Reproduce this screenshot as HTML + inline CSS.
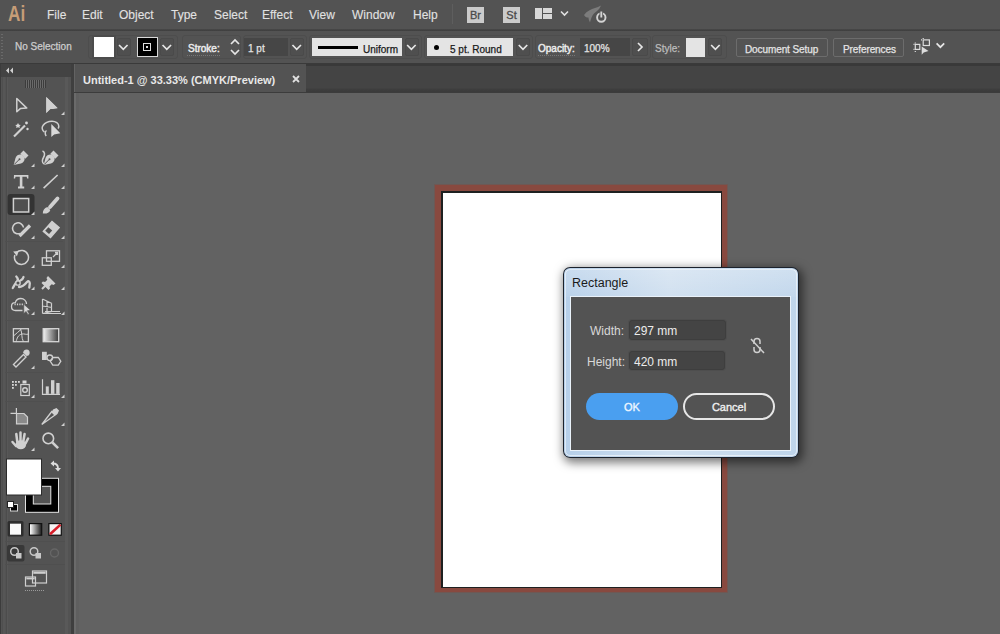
<!DOCTYPE html>
<html><head><meta charset="utf-8">
<style>
*{margin:0;padding:0;box-sizing:border-box}
html,body{width:1000px;height:634px;overflow:hidden;background:#626262;font-family:"Liberation Sans",sans-serif}
.a{position:absolute;white-space:nowrap}
.menu{color:#e2e2e2;font-size:12px;line-height:14px;top:8px;-webkit-text-stroke:0.1px currentColor}
.cb{color:#e4e4e4;font-size:10px;line-height:12px;-webkit-text-stroke:0.25px currentColor}
.dk{color:#1a1a1a;font-size:10px;line-height:12px;-webkit-text-stroke:0.25px currentColor}
.dlg{color:#d8d8d8;font-size:12px;line-height:14px}
</style></head><body>
<!-- bars -->
<div class="a" style="left:0;top:0;width:1000px;height:30px;background:#535353"></div>
<div class="a" style="left:0;top:29px;width:1000px;height:2px;background:linear-gradient(#484848,#3e3e3e)"></div>
<div class="a" style="left:0;top:31px;width:1000px;height:32px;background:#535353"></div>
<div class="a" style="left:0;top:63px;width:1000px;height:1px;background:#3a3a3a"></div>
<!-- tab row -->
<div class="a" style="left:74px;top:64px;width:926px;height:29px;background:linear-gradient(#393939 0 2px,#444444 2px 24px,#3e3e3e 25px,#393939)"></div>
<div class="a" style="left:74px;top:64px;width:232px;height:28px;background:#535353;border-left:1px solid #636363"></div>
<div class="a" style="left:74px;top:92px;width:926px;height:1px;background:#3c3c3c"></div>
<!-- toolbar panel -->
<div class="a" style="left:0;top:64px;width:71px;height:570px;background:#535353"></div>
<div class="a" style="left:0;top:64px;width:71px;height:13px;background:#434343"></div>
<div class="a" style="left:65px;top:77px;width:3px;height:557px;background:#595959"></div>
<div class="a" style="left:71px;top:64px;width:3px;height:570px;background:#3f3f3f"></div>
<div class="a" style="left:74px;top:93px;width:2px;height:541px;background:#6a6a6a"></div>
<div class="a" style="left:76px;top:93px;width:3px;height:541px;background:#5f5f5f"></div>

<!-- menu -->
<div class="a" style="left:8px;top:1px;font-size:22px;line-height:25px;font-weight:bold;color:#c69d77;transform:scaleX(0.78);transform-origin:0 0">Ai</div>
<div class="a menu" style="left:47px">File</div>
<div class="a menu" style="left:82px">Edit</div>
<div class="a menu" style="left:119px">Object</div>
<div class="a menu" style="left:171px">Type</div>
<div class="a menu" style="left:214px">Select</div>
<div class="a menu" style="left:262px">Effect</div>
<div class="a menu" style="left:309px">View</div>
<div class="a menu" style="left:352px">Window</div>
<div class="a menu" style="left:413px">Help</div>
<div class="a" style="left:452px;top:4px;width:1px;height:20px;background:#5e5e5e"></div>
<div class="a" style="left:467px;top:7px;width:17px;height:16px;background:#cbcbcb;color:#4a4a4a;font-size:11px;line-height:17px;text-align:center;-webkit-text-stroke:0.3px currentColor">Br</div>
<div class="a" style="left:503px;top:7px;width:17px;height:16px;background:#cbcbcb;color:#4a4a4a;font-size:11px;line-height:17px;text-align:center;-webkit-text-stroke:0.3px currentColor">St</div>
<svg class="a" style="left:530px;top:0" width="90" height="30">
 <rect x="5" y="8" width="7" height="11" fill="#d8d8d8"/>
 <rect x="13" y="8" width="9" height="5" fill="#d8d8d8"/>
 <rect x="13" y="14" width="9" height="5" fill="#d8d8d8"/>
 <path d="M31 11.5l3.5 3.5 3.5-3.5" stroke="#e0e0e0" stroke-width="1.6" fill="none"/>
 <path d="M54 15c3-4 7-6 11-7 2-.5 4-1.5 6-2.5-1 2-2 4-4 5.5l-3 2.5c-2 2-3 5-4 9-1-2-1.5-3.5-1.5-5-1.5 0-3 0-4.5-2.5z" fill="#7c7c7c"/>
 <circle cx="71.3" cy="17.5" r="4.2" stroke="#d4d4d4" stroke-width="1.9" fill="none"/>
 <path d="M71.3 11.5v6" stroke="#535353" stroke-width="3.5"/>
 <path d="M71.3 11.5v6" stroke="#d4d4d4" stroke-width="1.9"/>
</svg>

<!-- control bar -->

<div class="a" style="left:88px;top:35px;width:90px;height:24px;border:1px solid #4d4d4d;border-radius:3px"></div>
<div class="a" style="left:182px;top:35px;width:59px;height:24px;border:1px solid #4d4d4d;border-radius:3px"></div>
<div class="a" style="left:243px;top:35px;width:64px;height:24px;border:1px solid #4d4d4d;border-radius:3px"></div>
<div class="a" style="left:309px;top:35px;width:113px;height:24px;border:1px solid #4d4d4d;border-radius:3px"></div>
<div class="a" style="left:424px;top:35px;width:109px;height:24px;border:1px solid #4d4d4d;border-radius:3px"></div>
<div class="a" style="left:535px;top:35px;width:116px;height:24px;border:1px solid #4d4d4d;border-radius:3px"></div>
<div class="a" style="left:652px;top:35px;width:75px;height:24px;border:1px solid #4d4d4d;border-radius:3px"></div>

<div class="a" style="left:1px;top:34px;width:2px;height:27px;background:repeating-linear-gradient(#6a6a6a 0 1px,transparent 1px 3px)"></div>
<div class="a cb" style="left:15px;top:41px;color:#cdcdcd">No Selection</div>
<div class="a" style="left:92px;top:35px;width:24px;height:24px;background:#4c4c4c;border-radius:2px"></div>
<div class="a" style="left:94px;top:37px;width:20px;height:20px;background:#ffffff"></div>
<div class="a" style="left:117px;top:38px;width:14px;height:18px;background:#4f4f4f;border:1px solid #4a4a4a;border-radius:2px"></div>
<div class="a" style="left:137px;top:37px;width:21px;height:20px;background:#000;border:1px solid #d8d8d8"></div>
<div class="a" style="left:143px;top:43px;width:8px;height:8px;border:1.5px solid #e0e0e0"></div>
<div class="a" style="left:146px;top:46px;width:2px;height:2px;background:#e0e0e0"></div>
<div class="a" style="left:160px;top:38px;width:14px;height:18px;background:#4f4f4f;border:1px solid #4a4a4a;border-radius:2px"></div>
<div class="a cb" style="left:188px;top:43px;color:#ececec;-webkit-text-stroke:0.45px #ececec">Stroke:</div>
<div class="a" style="left:187px;top:55px;width:33px;height:1px;background:repeating-linear-gradient(90deg,#777 0 1px,transparent 1px 2px)"></div>
<div class="a" style="left:244px;top:38px;width:44px;height:18px;background:#464646"></div>
<div class="a cb" style="left:248px;top:43px">1 pt</div>
<div class="a" style="left:290px;top:38px;width:14px;height:18px;background:#4f4f4f;border:1px solid #4a4a4a;border-radius:2px"></div>
<div class="a" style="left:312px;top:38px;width:90px;height:18px;background:#e4e4e4"></div>
<div class="a" style="left:318px;top:46px;width:40px;height:3px;background:#000"></div>
<div class="a dk" style="left:363px;top:44px">Uniform</div>
<div class="a" style="left:405px;top:38px;width:14px;height:18px;background:#4f4f4f;border:1px solid #4a4a4a;border-radius:2px"></div>
<div class="a" style="left:427px;top:38px;width:86px;height:18px;background:#e4e4e4"></div>
<div class="a" style="left:434px;top:45px;width:5px;height:5px;border-radius:50%;background:#000"></div>
<div class="a dk" style="left:450px;top:44px">5 pt. Round</div>
<div class="a" style="left:516px;top:38px;width:14px;height:18px;background:#4f4f4f;border:1px solid #4a4a4a;border-radius:2px"></div>
<div class="a cb" style="left:538px;top:43px;color:#ececec;-webkit-text-stroke:0.45px #ececec">Opacity:</div>
<div class="a" style="left:538px;top:55px;width:37px;height:1px;background:repeating-linear-gradient(90deg,#777 0 1px,transparent 1px 2px)"></div>
<div class="a" style="left:580px;top:38px;width:50px;height:18px;background:#464646"></div>
<div class="a cb" style="left:584px;top:43px">100%</div>
<div class="a" style="left:632px;top:38px;width:16px;height:18px;background:#4f4f4f;border:1px solid #4a4a4a;border-radius:2px"></div>
<div class="a cb" style="left:655px;top:43px;color:#bcbcbc">Style:</div>
<div class="a" style="left:686px;top:38px;width:19px;height:19px;background:#e4e4e4"></div>
<div class="a" style="left:708px;top:38px;width:14px;height:18px;background:#4f4f4f;border:1px solid #4a4a4a;border-radius:2px"></div>
<div class="a" style="left:736px;top:38px;width:92px;height:19px;border:1px solid #6c6c6c;border-radius:2px;background:#535353"></div>
<div class="a cb" style="left:745px;top:44px;letter-spacing:-0.1px">Document Setup</div>
<div class="a" style="left:833px;top:38px;width:71px;height:19px;border:1px solid #6c6c6c;border-radius:2px;background:#535353"></div>
<div class="a cb" style="left:843px;top:44px;letter-spacing:-0.1px">Preferences</div>
<svg class="a" style="left:0;top:0;overflow:visible" width="1000" height="64">
 <g stroke="#e6e6e6" stroke-width="1.7" fill="none">
  <path d="M119.05 45l4.25 4.25 4.25-4.25"/>
  <path d="M162.55 45l4.25 4.25 4.25-4.25"/>
  <path d="M292.45 45l4.25 4.25 4.25-4.25"/>
  <path d="M407.15 45l4.25 4.25 4.25-4.25"/>
  <path d="M518.75 45l4.25 4.25 4.25-4.25"/>
  <path d="M711.15 45l4.25 4.25 4.25-4.25"/>
  <path d="M936.6 43.4l3.8 3.8 3.8-3.8"/>
  <path d="M231 44l4-4 4 4"/>
  <path d="M231 50l4 4 4-4"/>
  <path d="M638 43l4 4-4 4"/>
 </g>
 <g stroke="#dcdcdc" stroke-width="1.2" fill="none">
  <rect x="915.3" y="44.4" width="4.5" height="5"/>
  <rect x="923.2" y="39.9" width="6.2" height="5.6"/>
  <path d="M913.5 44.4h1M913.5 49.4h1M915.3 42.5v1M915.3 51v1M921 39.9h1M923.2 38v1"/>
 </g>
 <path d="M921.7 46.5v8.3l2-2.3 4.8-1.5z" fill="#dcdcdc"/>
</svg>

<!-- tab -->
<div class="a" style="left:83px;top:74px;font-size:11px;line-height:13px;font-weight:bold;color:#e8e8e8">Untitled-1 @ 33.33% (CMYK/Preview)</div>
<svg class="a" style="left:290px;top:73px" width="12" height="12"><path d="M3 3l6 6M9 3l-6 6" stroke="#e0e0e0" stroke-width="1.8"/></svg>

<!-- artboard -->
<div class="a" style="left:434px;top:184px;width:294px;height:409px;background:#6e5854"></div><div class="a" style="left:435px;top:185px;width:292px;height:407px;background:#88493f"></div>
<div class="a" style="left:441px;top:191px;width:281px;height:397px;background:#1e2020"></div>
<div class="a" style="left:443px;top:193px;width:278px;height:394px;background:#ffffff"></div>

<!-- TOOLBAR -->
<svg class="a" style="left:0;top:0" width="80" height="634">
<defs>
 <linearGradient id="gr" x1="0" x2="1" y1="0" y2="0"><stop offset="0" stop-color="#f4f4f4"/><stop offset="1" stop-color="#3a3a3a"/></linearGradient>
 <linearGradient id="gr2" x1="0" x2="1" y1="0" y2="0"><stop offset="0" stop-color="#ffffff"/><stop offset="1" stop-color="#222"/></linearGradient>
</defs>
<!-- header -->
<path d="M9 67.5v6l-3-3z M13 67.5v6l-3-3z" fill="#cfcfcf"/>
<g stroke="#3c3c3c" stroke-width="1">
 <path d="M25.5 80v8M27.5 80v8M29.5 80v8M31.5 80v8M33.5 80v8M35.5 80v8M37.5 80v8M39.5 80v8M41.5 80v8M43.5 80v8M45.5 80v8"/>
</g>
<g stroke="#6a6a6a" stroke-width="1">
 <path d="M26.5 80v8M28.5 80v8M30.5 80v8M32.5 80v8M34.5 80v8M36.5 80v8M38.5 80v8M40.5 80v8M42.5 80v8M44.5 80v8"/>
</g>
<!-- separators -->
<rect x="0" y="64" width="1" height="570" fill="#3c3c3c"/>
<rect x="2" y="77" width="1" height="557" fill="#4f4f4f"/><rect x="3" y="77" width="2" height="557" fill="#565656"/><rect x="6" y="77" width="1" height="557" fill="#4c4c4c"/><rect x="7" y="77" width="1" height="557" fill="#585858"/>
<g fill="#4f4f4f">
 <rect x="5" y="241" width="58" height="1"/>
 <rect x="5" y="320" width="58" height="1"/>
 <rect x="5" y="372" width="58" height="1"/>
 <rect x="5" y="401" width="58" height="1"/>
 <rect x="5" y="541" width="60" height="1"/>
 <rect x="5" y="564" width="60" height="1"/>
</g>
<!-- active rect bg -->
<rect x="7.5" y="194" width="27" height="21" rx="3" fill="#333333"/>
<rect x="7" y="545" width="17.5" height="16.5" rx="2" fill="#383838"/>

<g fill="#d0d0d0" stroke="none">
 <!-- corner triangles -->
 <path d="M61 115h3.5v-3.5z M31 167h3.5v-3.5z M61 167h3.5v-3.5z M31 189h3.5v-3.5z M61 189h3.5v-3.5z M31 215h3.5v-3.5z M61 215h3.5v-3.5z M31 239h3.5v-3.5z M61 239h3.5v-3.5z M31 268h3.5v-3.5z M61 268h3.5v-3.5z M31 290h3.5v-3.5z M61 290h3.5v-3.5z M31 315h3.5v-3.5z M61 315h3.5v-3.5z M31 369h3.5v-3.5z M31 398h3.5v-3.5z M61 398h3.5v-3.5z M61 426h3.5v-3.5z M31 451h3.5v-3.5z"/>
 <!-- selection filled arrow -->
 <path d="M46.3 97v16l3.6-4 3.2 0 4.5-1z"/>
 <path d="M46.3 97L57.6 108.3 51 108.5 46.3 113z"/>
 <!-- pen -->
 <path d="M13.7 165 L15.5 158 C16.5 155 19 154 21.5 154.5 L24.5 157.5 C25 160 24 162.5 21 163.5 Z"/>
 <path d="M23.5 150.5l5 5-3.2 3.2-5-5z"/>
 <!-- curvature pen -->
 <path d="M43.7 165 L45.5 158 C46.5 155 49 154 51.5 154.5 L54.5 157.5 C55 160 54 162.5 51 163.5 Z"/>
 <path d="M53.5 150.5l5 5-3.2 3.2-5-5z"/>
 <!-- T -->
 <path d="M14 175h14.4v3.5h-1.3l-.4-1.8h-4.3v9.9h1.8v1.9h-6.2v-1.9h1.8v-9.9h-4.3l-.4 1.8h-1.3z"/>
 <!-- hand -->
 <ellipse cx="20.8" cy="444.8" rx="5.3" ry="4.5"/>
 <path d="M16 446l-3.5-4M17.3 442l-1-8M20.5 441v-8.5M23.3 441.5l1.3-7.5M25.5 443.5l2.6-5" stroke="#d0d0d0" stroke-width="2.5" stroke-linecap="round"/>
 <!-- pin head -->
 <path d="M48 276l7.5 7.5-2 1.5-1.8-.8-2.2 2.2.5 2.2-1.5 1.4-7-7 1.4-1.5 2.2.5 2.2-2.2-.8-1.8z"/>
 <!-- graph bars -->
 <rect x="45.8" y="386.4" width="3" height="7.5"/>
 <rect x="51" y="380.2" width="3.4" height="13.7"/>
 <rect x="56.2" y="383" width="3.4" height="10.9"/>
 <!-- blend -->
 <rect x="42" y="351.8" width="4.8" height="8.2"/>
 <!-- eyedropper bulb -->
 <path d="M24 350.5c1.5-1.5 4-1.5 5 0s1 3.5-.5 5l-2 .5-3.5-3.5z"/>
 <!-- slice handle -->
 <path d="M53 409.5l3.5-1.5 2.5 2.5-1.5 3.5-3 1.5-3-3z"/>
 <!-- artboard page fill -->
 <path d="M16.5 413.5h7.5l3.5 3.5v6.8h-11z" fill="#8a8a8a"/>
 <!-- brush -->
 <path d="M42.8 213.5c0-3 1.5-5.5 4.5-6.5l3 3c-1 3-4 4-7.5 3.5z"/>
</g>

<g fill="none" stroke="#d0d0d0" stroke-width="1.5">
 <!-- direct selection hollow arrow -->
 <path d="M16.8 98.5v13.3l3.5-3.2 6.5-0.5z" stroke-linejoin="round"/>
 <!-- wand -->
 <path d="M14 136.5l11-11" stroke-width="2.2"/>
 <!-- lasso -->
 <path d="M44.5 132c-2.5-1.5-3-4.5-1.5-6.5 2-2.8 5.5-4.3 9-4.3 3.8 0 6.8 2.2 6.8 5 0 .8-.3 1.6-.8 2.2"/>
 <path d="M46.5 130.5c-1.5 1-1.8 3.5-.3 5.5"/>
 <!-- curvature curve -->
 <path d="M42.5 151c2.5 1 2.5 4 1 6.5s-1.5 5 .5 6.5"/>
 <!-- line -->
 <path d="M43.6 188.2L57.6 175" stroke-width="1.6"/>
 <!-- rect -->
 <rect x="13.4" y="198.5" width="15.3" height="13.5" fill="#505050"/>
 <!-- brush handle -->
 <path d="M50 207l7.5-8.5" stroke-width="3.8" stroke-linecap="round"/>
 <!-- shaper -->
 <path d="M20 233.5a5.5 5.5 0 1 1 3.5-6"/>
 <path d="M19.5 236l10.5-10.5" stroke-width="3.2"/>
 <!-- eraser -->
 <path d="M43.5 231.3l8.5-9.7 7 6-8.5 9.7z" stroke-width="1.6" fill="#d0d0d0"/>
 <!-- rotate -->
 <path d="M16.5 252.5a7 7 0 1 1 -1.6 2.5"/>
 <!-- scale -->
 <rect x="46.5" y="250.8" width="13" height="10.5" stroke-width="1.3"/>
 <rect x="42.3" y="257.8" width="9" height="7.5" stroke-width="1.3"/>
 <path d="M53 257l4.5-4.5M55 252.5h2.5v2.5" stroke-width="1.3"/>
 <!-- warp -->
 <path d="M12.8 288c1.5-2.5 2.5-5 4.5-7 1-1.2.5-3-1-4.5M17.5 281.5c2.5-.5 5-1 6-4.5M19 287c3.5 0 6-2.5 8-5 1.5-1.5 2.8-.5 2.8 1.5l-.5 4" stroke-width="2.3" stroke-linecap="round"/>
 <circle cx="18" cy="283" r="2.2" stroke-width="1.3" fill="#535353"/>
 <!-- pin needle -->
 <path d="M42 289l4.5-4.5" stroke-width="2"/>
 <!-- shape builder -->
 <path d="M15.5 310.5h7M15.5 310.5c-2.5 0-4-1.8-4-4 0-2.2 1.6-3.8 3.8-3.8.6-2.5 2.8-4.2 5.5-4.2 3.2 0 5.7 2.4 5.7 5.6" stroke-width="1.3"/>
 <path d="M14.5 304.4h10" stroke-dasharray="1.2 1.2" stroke-width="1.6"/>
 <!-- perspective -->
 <path d="M42.5 299v14.5M42.5 299l9.5 4.5M42.5 313.5l9.5-2M47 301v11.5M51.5 303.2v8.5M42.5 306l9.5 1.5M44 313.5h17M45 311.5h15" stroke-width="1.2"/>
 <!-- mesh -->
 <rect x="13.4" y="328.7" width="15" height="13" stroke-width="1.3"/>
 <path d="M13.5 336c3-2 5-5 8-7M16 342c1-4 2-7 6-8 2.5-.5 4 1 6.5 0M20.5 329c2 4 .5 8 3 13" stroke-width="1"/>
 <!-- gradient border -->
 <!-- eyedropper tube -->
 <path d="M13.5 364.5l10-10 2.5 2.5-10 10z" stroke-width="1.4"/>
 <!-- blend shapes -->
 <circle cx="49.8" cy="357.8" r="2.8" stroke-width="1.3"/>
 <path d="M52.8 357.5h5.5l2.5 3.8-2.5 3.8h-5.5l-2.5-3.8z" stroke-width="1.3"/>
 <!-- symbol sprayer -->
 <rect x="20.8" y="384.5" width="8.5" height="11" stroke-width="1.2"/>
 <circle cx="25" cy="390" r="2.3" stroke-width="1.4"/>
 <!-- graph axes -->
 <path d="M42.5 379.3v15h17.5" stroke-width="1.2"/>
 <!-- artboard -->
 <path d="M16.5 413.5h7.5l3.5 3.5v6.8h-11z" stroke-width="1.2"/>
 <path d="M10.5 413.3h6M16.4 408v5.5" stroke-width="1.2"/>
 <!-- slice blade -->
 <path d="M41.8 424.5l10-13 4 3z" stroke-width="1.3"/>
 <!-- zoom -->
 <circle cx="48.3" cy="438.4" r="5.3" stroke-width="1.6"/>
 <path d="M52.3 442.4l5.8 5.8" stroke-width="2.6"/>
</g>
<path d="M14.2 164.5l5-5M44.2 164.5l5-5" stroke="#535353" stroke-width="1"/>
<circle cx="19.5" cy="159.2" r="1" fill="#535353"/><circle cx="49.5" cy="159.2" r="1" fill="#535353"/>
<path d="M45.2 230.8l3.2-3.6 3.8 3.2-3.2 3.6z" fill="#505050"/>
<path d="M13.2 251.5l5.5-.5-1.8 5.2z" fill="#d0d0d0"/>
<path d="M23.8 304.2v9.3l2.3-2.1 1.9 3.3 1.3-.7-1.9-3.3 3.1-.4z" fill="#d8d8d8" stroke="#535353" stroke-width=".6"/>
<!-- gradient tool -->
<rect x="43.2" y="328.7" width="15.5" height="13" fill="url(#gr)" stroke="#d8d8d8" stroke-width="1.3"/>
<!-- wand sparkles -->
<g fill="#d8d8d8">
 <path d="M18 123l1 1.8 1.8 .2-1.3 1.3.3 1.8-1.8-.9-1.8.9.3-1.8-1.3-1.3 1.8-.2z"/>
 <circle cx="26.5" cy="123" r="1.4"/>
 <circle cx="27.5" cy="129" r="1.2"/>
 <!-- symbol dots -->
 <rect x="12" y="381" width="1.8" height="1.8"/><rect x="15" y="381" width="1.8" height="1.8"/><rect x="18" y="381" width="1.8" height="1.8"/>
 <rect x="12" y="384" width="1.8" height="1.8"/><rect x="15" y="384" width="1.8" height="1.8"/>
 <rect x="12" y="387" width="1.8" height="1.8"/>
 <rect x="22.5" y="380.5" width="4" height="3"/>
 <!-- lasso arrow -->
 <path d="M51.3 124v13l2.8-2.6 6.2-1.2z"/>
</g>
<!-- fill / stroke -->
<rect x="25" y="477.8" width="34" height="35" fill="#e0e0e0"/>
<rect x="26" y="478.8" width="32" height="33" fill="#000"/>
<rect x="32.8" y="485.8" width="18.5" height="18.7" fill="#e0e0e0"/>
<rect x="33.8" y="486.8" width="16.5" height="16.7" fill="#535353"/>
<rect x="6" y="458.5" width="36" height="37" fill="#2c2c2c"/>
<rect x="7" y="459.5" width="34" height="35" fill="#ffffff"/>
<path d="M53 463.5c3 0 5 2 5 5" stroke="#dcdcdc" stroke-width="1.8" fill="none"/>
<path d="M50.5 463.5l3.5-3v6z M58 471.5l-3-3.5h6z" fill="#dcdcdc"/>
<rect x="10.5" y="504.5" width="7" height="6.5" fill="#000" stroke="#d8d8d8" stroke-width="1"/>
<rect x="7.5" y="501.5" width="6" height="6" fill="#fff" stroke="#222" stroke-width="1"/>
<!-- color / gradient / none -->
<rect x="7.5" y="521" width="16" height="15.5" rx="1.5" fill="#2e2e2e"/>
<rect x="10" y="523.7" width="11" height="11" fill="#fafafa"/>
<rect x="28.8" y="523" width="13.5" height="12.8" fill="#111"/>
<rect x="30" y="524.2" width="11.2" height="10.4" fill="url(#gr2)"/>
<rect x="48.3" y="523" width="13.5" height="12.8" fill="#111"/>
<rect x="49.5" y="524.2" width="11.2" height="10.4" fill="#f4f4f4"/>
<path d="M50 534.2L60.5 524.6" stroke="#d81e2a" stroke-width="2.6"/>
<!-- draw modes -->
<g fill="none" stroke="#c8c8c8" stroke-width="1.5">
 <circle cx="14.5" cy="551.5" r="3.8"/>
 <circle cx="34" cy="551.5" r="3.8"/>
</g>
<rect x="16" y="553" width="5.5" height="5.5" fill="#c8c8c8"/>
<rect x="35.5" y="553" width="5.5" height="5.5" fill="#c8c8c8"/>
<circle cx="54.5" cy="553" r="4" fill="none" stroke="#666" stroke-width="1.4"/>
<!-- screen mode -->
<g fill="none" stroke="#cfcfcf" stroke-width="1.2">
 <rect x="25.5" y="577" width="10" height="9"/>
 <rect x="32.5" y="571" width="14" height="12"/>
</g>
<rect x="33.3" y="571.8" width="12.4" height="2" fill="#cfcfcf"/>
<rect x="26.3" y="577.8" width="8.4" height="1.6" fill="#cfcfcf"/>
<path d="M25 590.5h20" stroke="#9a9a9a" stroke-width="1" stroke-dasharray="1 1"/>
</svg>


<!-- dialog -->
<div class="a" style="left:563px;top:267px;width:236px;height:191px;border-radius:7px;box-shadow:2px 3px 10px 2px rgba(0,0,0,0.5)"></div>
<div class="a" style="left:563px;top:267px;width:236px;height:191px;border-radius:7px;background:#1c222c"></div>
<div class="a" style="left:564px;top:268px;width:234px;height:189px;border-radius:6px;background:linear-gradient(90deg,#b6cfe9,#cfdfef 45%,#bfd5eb)"></div>
<div class="a" style="left:565px;top:269px;width:232px;height:187px;border-radius:5px;border:1px solid rgba(255,255,255,0.55)"></div>
<div class="a" style="left:565px;top:270px;width:232px;height:27px;background:linear-gradient(180deg,rgba(255,255,255,0.25),rgba(255,255,255,0.05))"></div>
<div class="a" style="left:570px;top:296px;width:221px;height:155px;background:#eaf2fa"></div>
<div class="a" style="left:571px;top:297px;width:219px;height:153px;background:#535353"></div>
<div class="a" style="left:572px;top:276px;font-size:12.5px;line-height:14px;color:#1a1a1a">Rectangle</div>
<div class="a dlg" style="left:590px;top:324px">Width:</div>
<div class="a dlg" style="left:587px;top:355px">Height:</div>
<div class="a" style="left:629px;top:320px;width:97px;height:20px;background:#444;border:1px solid #3e3e3e;border-radius:3px;box-shadow:0 0 0 1px #4e4e4e"></div>
<div class="a" style="left:629px;top:351px;width:96px;height:19px;background:#444;border:1px solid #3e3e3e;border-radius:3px;box-shadow:0 0 0 1px #4e4e4e"></div>
<div class="a dlg" style="left:634px;top:324px;color:#ececec">297 mm</div>
<div class="a dlg" style="left:634px;top:355px;color:#ececec">420 mm</div>
<div class="a" style="left:586px;top:393px;width:92px;height:27px;border-radius:14px;background:#4a9ff0"></div>
<div class="a dlg" style="left:586px;top:400px;width:92px;text-align:center;color:#eef6ff;font-size:11px;-webkit-text-stroke:0.35px currentColor">OK</div>
<div class="a" style="left:683px;top:393px;width:92px;height:27px;border-radius:14px;border:2px solid #e6e6e6"></div>
<div class="a dlg" style="left:683px;top:400px;width:92px;text-align:center;color:#f0f0f0;font-size:11px;-webkit-text-stroke:0.35px currentColor">Cancel</div>
<svg class="a" style="left:748px;top:336px" width="20" height="20">
 <g stroke="#d0d0d0" stroke-width="1.5" fill="none">
  <path d="M6 8V5.5a3 3 0 0 1 6 0V8"/>
  <path d="M6 11v2.5a3 3 0 0 0 6 0V11"/>
  <path d="M3 3l13 14"/>
 </g>
</svg>
</body></html>
